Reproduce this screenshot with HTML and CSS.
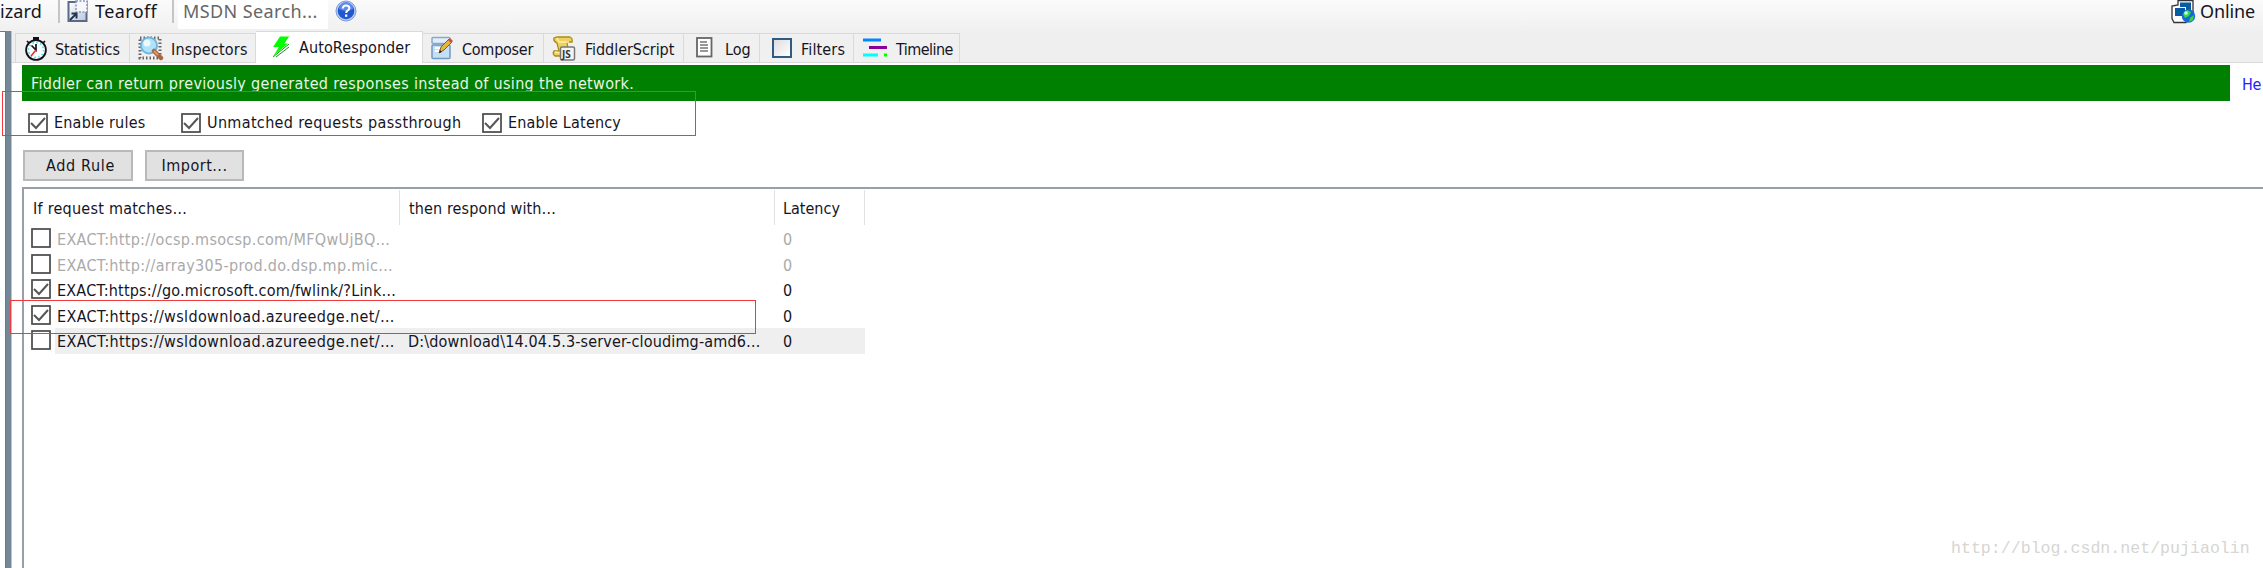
FILE: index.html
```html
<!DOCTYPE html>
<html lang="en">
<head>
<meta charset="utf-8">
<title>Fiddler AutoResponder</title>
<link rel="stylesheet" href="styles.css">
</head>
<body>
<div class="window">
  <header class="toolbar">
    <span class="t w-wizard">izard</span><i class="divider d1"></i>
    <svg class="ic-tear" width="22" height="24" viewBox="0 0 22 24"><defs><linearGradient id="tg" x2="1" y2="1"><stop stop-color="#fff"/><stop offset="1" stop-color="#b9c7dc"/></linearGradient></defs><rect x="1.500" y="2" width="18" height="19" fill="url(#tg)" stroke="#5a6b88" stroke-width="2"/><path d="M9 1h11v11H9z" fill="#f5f7fb" stroke="#8796b1" stroke-width="1.500" stroke-dasharray="2 1.500"/><path d="M3 20l7-7M4.500 13.500h5v5" fill="none" stroke="#26364f" stroke-width="2"/></svg>
    <span class="t w-tear">Tearoff</span><i class="divider d2"></i>
    <span class="search"><span class="t w-msdn">MSDN Search...</span></span>
    <svg class="ic-help" width="22" height="22" viewBox="0 0 22 22"><circle cx="11" cy="11" r="10" fill="#bccdf0" stroke="#7d9bd8"/><circle cx="11" cy="11" r="8.300" fill="#2158cf"/><path d="M4 9a7 7 0 0 1 14 0q-7 4-14 0" fill="#5c8ceb"/><path d="M7.800 8.500q.2-3 3.300-3 3.200 0 3.200 2.600 0 1.600-1.700 2.500-1.400.8-1.400 2.400" fill="none" stroke="#fff" stroke-width="2"/><rect x="10" y="14.500" width="2.300" height="2.300" fill="#fff"/></svg>
    <svg class="ic-online" width="25" height="24" viewBox="0 0 25 24"><path d="M7 .5h15v14h-4l-3 8H3l-2-4V6l6-1z" fill="#fff" stroke="#333" stroke-width="1.300"/><path d="M9 2.500h11v9H9z" fill="#075aa3"/><path d="M3 7h12v10H3z" fill="#fff"/><path d="M4 8h10v8H4z" fill="#075aa3"/><circle cx="17.500" cy="16" r="6.700" fill="#1767dc"/><path d="M12 14l4-4 4 2-2 4-4 2zM19 18l4-3-1 5-4 2z" fill="#35dc38"/><circle cx="15" cy="13" r="1.800" fill="#c9ffff"/></svg>
    <span class="t w-online">Online</span>
  </header>
  <div class="main">
    <aside class="sessions"></aside>
    <div class="splitter"></div>
    <section class="panel">
      <nav class="tabs">
        <div class="tab t1"><svg class="ic" width="24" height="25" viewBox="0 0 24 25"><path d="M9 1h6v3H9z" fill="#111"/><circle cx="12" cy="14" r="9.900" fill="#f7ffff" stroke="#111" stroke-width="1.800"/><circle cx="12" cy="14" r="7.500" fill="none" stroke="#35d9ee" stroke-width="1.500" stroke-dasharray="1.500 2.430"/><path d="M7.500 9.500l4.500 4.500V8M3 5l2 2M21 5l-2 2" fill="none" stroke="#111" stroke-width="1.700"/><path d="M12 14l-5 6" stroke="#f22" stroke-width="1.500"/></svg><span class="t w-stat">Statistics</span></div>
        <div class="tab t2"><svg class="ic" width="26" height="25" viewBox="0 0 26 25"><path d="M2 2h20v20H2z" fill="none" stroke="#666" stroke-width="3" stroke-dasharray="1.500 2"/><circle cx="11" cy="9.500" r="8" fill="#afe3fb" stroke="#74b4dc" stroke-width="2"/><circle cx="9" cy="7" r="3.500" fill="#eafaff"/><path d="M16 15l7 7" stroke="#a96740" stroke-width="4.500" stroke-linecap="round"/><path d="M16 15l4 4" stroke="#dd9b65" stroke-width="2"/></svg><span class="t w-insp">Inspectors</span></div>
        <div class="tab t3 active"><svg class="ic" width="20" height="23" viewBox="0 0 20 23"><path d="M18 8L2 21M18 11L5 21M17 1l-4 6" fill="none" stroke="#238c23" stroke-width="1"/><path d="M9 .5h9l-5 7h4L2 20.500l6-9.500H2z" fill="#0f0"/></svg><span class="t w-auto">AutoResponder</span></div>
        <div class="tab t4"><svg class="ic" width="23" height="24" viewBox="0 0 23 24"><rect x="1" y="1.500" width="18" height="6" rx="1" fill="#e1effb" stroke="#87a9cb" stroke-width="1.500"/><rect x="1" y="9" width="18" height="13.500" rx="1" fill="#c5dff6" stroke="#7299bf" stroke-width="1.500"/><path d="M4 12h8M4 15h5" stroke="#fff" stroke-width="2"/><path d="M8 17l2-6 8-8 3 3-8 8z" fill="#e9b43e" stroke="#7b622d"/><path d="M17 4l2-2 3 3-2 2z" fill="#c75340"/><path d="M8 17l1-3 2 2z" fill="#222"/></svg><span class="t w-comp">Composer</span></div>
        <div class="tab t5"><svg class="ic" width="24" height="25" viewBox="0 0 24 25"><path d="M5 1h13q3 1 2 5h-5l1 8-4 6H3q-3-2-1-5h5L5 7Q1 5 2 2z" fill="#eed25f" stroke="#aa8b1b" stroke-width="1.300"/><path d="M5 2l2 4h10M3 16l7 1" fill="none" stroke="#fff2a2" stroke-width="1.500"/><rect x="8.500" y="11" width="14" height="13" rx="1.500" fill="#f4f4f4" stroke="#777" stroke-width="1.500"/><text class="js" x="10" y="21.500">JS</text></svg><span class="t w-script">FiddlerScript</span></div>
        <div class="tab t6"><svg class="ic" width="17" height="22" viewBox="0 0 17 22"><rect x="1" y="1" width="14.500" height="18.500" fill="#fff" stroke="#666" stroke-width="1.800"/><path d="M4 5h7M4 8h8M4 11h8M4 14h8" stroke="#777" stroke-width="1.300"/></svg><span class="t w-log">Log</span></div>
        <div class="tab t7"><span class="filterbox"></span><span class="t w-filt">Filters</span></div>
        <div class="tab t8"><svg class="ic" width="25" height="20" viewBox="0 0 25 20"><path d="M0 2h18" stroke="#0087ff" stroke-width="3"/><path d="M6 9.500h18" stroke="#809" stroke-width="3"/><path d="M0 17h15" stroke="#0ff" stroke-width="3"/><path d="M21 17h3" stroke="#0f0" stroke-width="3"/></svg><span class="t w-time">Timeline</span></div>
      </nav>
      <div class="notice"><div class="banner"><span class="t w-ban">Fiddler can return previously generated responses instead of using the network.</span></div><span class="t w-help">He</span></div>
      <div class="options">
        <label class="option o1"><svg class="box" viewBox="0 0 20 20"><rect x="1" y="1" width="18" height="18"/><path d="M3 10l5 5 9-10"/></svg><span class="t w-rules">Enable rules</span></label>
        <label class="option o2"><svg class="box" viewBox="0 0 20 20"><rect x="1" y="1" width="18" height="18"/><path d="M3 10l5 5 9-10"/></svg><span class="t w-unm">Unmatched requests passthrough</span></label>
        <label class="option o3"><svg class="box" viewBox="0 0 20 20"><rect x="1" y="1" width="18" height="18"/><path d="M3 10l5 5 9-10"/></svg><span class="t w-lat">Enable Latency</span></label>
      </div>
      <div class="actions"><button class="add"><span class="t w-add">Add Rule</span></button><button class="import"><span class="t w-imp">Import...</span></button></div>
      <div class="list">
        <div class="head"><span class="h1"><span class="t w-if">If request matches…</span></span><span class="h2"><span class="t w-then">then respond with…</span></span><span class="h3"><span class="t w-hlat">Latency</span></span></div>
        <div class="row off"><svg class="box" viewBox="0 0 20 20"><rect x="1" y="1" width="18" height="18"/></svg><div class="cells"><span class="c1"><span class="t w-r1">EXACT:http://ocsp.msocsp.com/MFQwUjBQ…</span></span><span class="c2"></span><span class="c3">0</span></div></div>
        <div class="row off"><svg class="box" viewBox="0 0 20 20"><rect x="1" y="1" width="18" height="18"/></svg><div class="cells"><span class="c1"><span class="t w-r2">EXACT:http://array305-prod.do.dsp.mp.mic…</span></span><span class="c2"></span><span class="c3">0</span></div></div>
        <div class="row"><svg class="box" viewBox="0 0 20 20"><rect x="1" y="1" width="18" height="18"/><path d="M3 10l5 5 9-10"/></svg><div class="cells"><span class="c1"><span class="t w-r3">EXACT:https://go.microsoft.com/fwlink/?Link…</span></span><span class="c2"></span><span class="c3">0</span></div></div>
        <div class="row"><svg class="box" viewBox="0 0 20 20"><rect x="1" y="1" width="18" height="18"/><path d="M3 10l5 5 9-10"/></svg><div class="cells"><span class="c1"><span class="t w-r4">EXACT:https://wsldownload.azureedge.net/…</span></span><span class="c2"></span><span class="c3">0</span></div></div>
        <div class="row selected"><svg class="box" viewBox="0 0 20 20"><rect x="1" y="1" width="18" height="18"/></svg><div class="cells"><span class="c1"><span class="t w-r4">EXACT:https://wsldownload.azureedge.net/…</span></span><span class="c2"><span class="t w-d">D:\download\14.04.5.3-server-cloudimg-amd6…</span></span><span class="c3">0</span></div></div>
      </div>
    </section>
  </div>
  <div class="mark mark-options"></div>
  <div class="mark mark-row"></div>
  <div class="watermark">http://blog.csdn.net/pujiaolin</div>
</div>
</body>
</html>
```
FILE: styles.css
```css
* { box-sizing: border-box; }
body { margin: 0; background: #fff; font-family: "DejaVu Sans Condensed", "Noto Sans", sans-serif; font-size: 16px; color: #15151f; }
.window { position: relative; width: 2263px; height: 568px; overflow: hidden; display: flex; flex-direction: column; }
.t { display: inline-block; white-space: pre; flex: none; }
.toolbar { display: flex; height: 31px; flex: none; align-items: flex-start; line-height: 22px; background: linear-gradient(#fbfbfb, #f0f0f0); font-family: "Noto Sans", sans-serif; font-size: 18px; }
.divider { width: 2px; height: 23px; background: #c5c5c5; flex: none; }
.d1 { margin-left: 16px; }
.ic-tear { margin-left: 7px; }
.w-wizard { width: 42px; letter-spacing: .1px; }
.w-tear { width: 63px; margin-left: 6px; letter-spacing: .4px; }
.d2 { margin-left: 14px; }
.search { width: 150px; height: 29px; padding-left: 5px; margin-left: 4px; background: #fff; color: #666; }
.w-msdn { letter-spacing: .4px; }
.ic-help { margin-left: 7px; }
.ic-online { margin-left: auto; }
.w-online { width: 56px; margin: 0 7px 0 4px; letter-spacing: -.1px; }
.main { display: flex; flex: 1; min-height: 0; background: #efefef; }
.sessions { width: 5px; background: #fff; border-top: 1px solid #777; flex: none; }
.splitter { width: 7px; background: #738797; border-left: 1px solid #777; border-right: 1px solid #bcc5cc; flex: none; }
.panel { flex: 1; min-width: 0; display: flex; flex-direction: column; background: #fff; }
.tabs { height: 32px; display: flex; align-items: flex-end; background: #efefef; border-bottom: 1px solid #d9d9d9; padding-left: 3px; flex: none; }
.tab { height: 29px; display: flex; align-items: center; border: 1px solid #dadada; border-width: 1px 1px 0 0; background: #f0f0f0; flex: none; }
.tab .t { padding-top: 3px; }
.tab.active { height: 32px; background: #fff; margin-bottom: -1px; }
.tab.active .t { padding-top: 0; }
.t1 { width: 115px; padding-left: 8px; border-left-width: 1px; }
.t2 { width: 126px; padding-left: 8px; }
.t3 { width: 167px; padding-left: 15px; }
.t4 { width: 121px; padding-left: 8px; }
.t5 { width: 140px; padding-left: 8px; }
.t6 { width: 76px; padding-left: 12px; }
.t7 { width: 94px; padding-left: 12px; }
.t8 { width: 106px; padding-left: 9px; }
.w-stat { margin-left: 7px; letter-spacing: -.1px; }
.w-insp { margin-left: 7px; letter-spacing: .2px; }
.w-auto { margin-left: 8px; letter-spacing: .1px; }
.w-comp { margin-left: 8px; letter-spacing: -.25px; }
.w-script { margin-left: 9px; letter-spacing: -.05px; }
.w-log { margin-left: 12px; }
.w-filt { margin-left: 9px; letter-spacing: .15px; }
.w-time { margin-left: 8px; letter-spacing: -.55px; }
.ic { flex: none; }
.js { font: bold 10px "Noto Sans", sans-serif; fill: #333; }
.filterbox { width: 20px; height: 20px; border: 2px solid #315b83; background: linear-gradient(135deg, #ddd, #fff); }
.notice { display: flex; margin: 2px 0 0 10px; height: 36px; flex: none; }
.banner { width: 2208px; flex: none; background: #008000; color: #e8f5e8; padding-left: 9px; line-height: 38px; height: 36px; }
.w-ban { letter-spacing: .325px; }
.w-help { color: #22f; width: 21px; margin-left: 12px; line-height: 40px; height: 36px; letter-spacing: -.3px; }
.options { display: flex; height: 40px; padding: 12px 0 0 16px; flex: none; }
.option { display: flex; gap: 6px; line-height: 19px; }
.o1 { width: 153px; }
.o2 { width: 301px; }
.w-rules { letter-spacing: .2px; }
.w-unm { letter-spacing: .345px; }
.w-lat { letter-spacing: .18px; }
.box { width: 20px; height: 20px; flex: none; fill: #fff; stroke: #484848; stroke-width: 1.700; }
.box path { fill: none; stroke: #555; stroke-width: 2; }
.actions { display: flex; gap: 12px; padding: 9px 0 0 11px; height: 46px; flex: none; }
button { height: 31px; border: 2px solid #b9b9b9; background: #e1e1e1; font: inherit; color: inherit; padding: 0; }
.add { width: 110px; padding-left: 5px; }
.import { width: 99px; }
.w-add { letter-spacing: .65px; }
.w-imp { letter-spacing: .5px; }
.list { flex: 1; margin-left: 10px; border: solid #9a9fa7; border-width: 2px 0 0 2px; }
.head { display: flex; height: 37px; line-height: 37px; }
.h1, .h2, .h3 { height: 35px; margin-top: 1px; border-right: 1px solid #e2e2e2; padding-left: 9px; flex: none; }
.h1 { width: 376px; }
.h2 { width: 375px; }
.h3 { width: 90px; padding-left: 8px; }
.w-if { letter-spacing: .25px; }
.w-then { letter-spacing: .12px; }
.row { display: flex; height: 25.500px; padding: 2px 0 0 7px; }
.row .cells { margin-top: -2px; margin-left: 4px; width: 810px; height: 25.500px; display: flex; line-height: 27px; padding-left: 2px; }
.selected .cells { background: #efefef; }
.off .cells { color: #aaa; }
.c1 { width: 351px; flex: none; }
.c2 { width: 375px; flex: none; }
.w-r1 { letter-spacing: .31px; }
.w-r2 { letter-spacing: .32px; }
.w-r3 { letter-spacing: .21px; }
.w-r4 { letter-spacing: .36px; }
.w-d { letter-spacing: .16px; }
.mark { position: absolute; border: 1px solid #ef3b3b; }
.mark-options { left: 2px; top: 91px; width: 694px; height: 45px; }
.mark-row { left: 10px; top: 300px; width: 746px; height: 34px; }
.watermark { position: absolute; left: 1951px; top: 537px; font: 16.600px/24px "Liberation Mono", monospace; color: #d6d6d2; }
```
